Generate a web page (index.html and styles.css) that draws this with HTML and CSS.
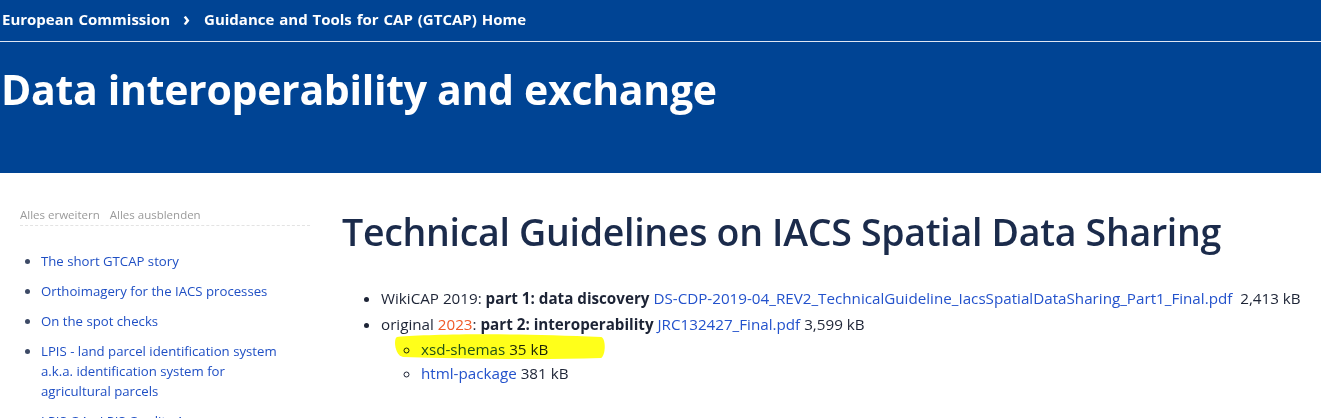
FILE: index.html
```html
<!DOCTYPE html>
<html lang="en">
<head>
    <meta charset="UTF-8">
    <title>Data interoperability and exchange</title>
    <link rel="stylesheet" href="styles.css">
</head>
<body>
    <div class="header">
        <div class="breadcrumb">
            <a href="#">European Commission</a>
            <span class="sep">&#8250;</span>
            <a href="#">Guidance and Tools for CAP (GTCAP) Home</a>
        </div>
        <h1 class="site-title">Data interoperability and exchange</h1>
    </div>

    <div class="page">
        <!-- Sidebar navigation -->
        <div class="sidebar">
            <div class="tree-tools">
                <a href="#">Alles erweitern</a>
                <a href="#">Alles ausblenden</a>
            </div>
            <ul class="nav">
                <li><a href="#">The short GTCAP story</a></li>
                <li><a href="#">Orthoimagery for the IACS processes</a></li>
                <li><a href="#">On the spot checks</a></li>
                <li><a href="#">LPIS - land parcel identification system a.k.a. identification system for agricultural parcels</a></li>
                <li><a href="#">LPIS QA - LPIS Quality Assurance</a></li>
            </ul>
        </div>

        <!-- Main content -->
        <div class="main">
            <h2 class="page-title">Technical Guidelines on IACS Spatial Data Sharing</h2>
            <ul class="docs">
                <li>WikiCAP 2019: <strong>part 1: data discovery</strong> <a href="#">DS-CDP-2019-04_REV2_TechnicalGuideline_IacsSpatialDataSharing_Part1_Final.pdf</a>&nbsp; 2,413 kB</li>
                <li>original <span class="year">2023</span>: <strong>part 2: interoperability</strong> <a href="#">JRC132427_Final.pdf</a> 3,599 kB
                    <ul class="sub">
                        <li class="marked">
                            <a href="#">xsd-shemas</a> 35 kB
                            <svg class="marker" width="214" height="30" viewBox="0 0 214 30">
                                <path d="M4 6 C40 3 120 2 208 6 C213 7 213 24 208 27 C150 29 80 28 10 26 C2 25 0 8 4 6 Z" fill="#ffff1a"/>
                            </svg>
                        </li>
                        <li><a href="#">html-package</a> 381 kB</li>
                    </ul>
                </li>
            </ul>
        </div>
    </div>
</body>
</html>
```

FILE: styles.css
```css
* {
    margin: 0;
    padding: 0;
    box-sizing: border-box;
}

body {
    font-family: 'Open Sans', 'Noto Sans', sans-serif;
    background: white;
    color: #1d2436;
}

a {
    text-decoration: none;
}

.header {
    background: #004494;
    height: 173px;
    color: white;
}

.breadcrumb {
    height: 42px;
    border-bottom: 1px solid #dfe6f3;
    padding: 9px 0 0 2px;
    font-size: 15px;
    font-weight: 700;
    word-spacing: 1px;
    display: flex;
}

.breadcrumb a {
    color: white;
}

.breadcrumb .sep {
    margin: 0 14px 0 13px;
    font-size: 19px;
    line-height: 20px;
}

.site-title {
    font-size: 41px;
    font-weight: 700;
    letter-spacing: -0.3px;
    padding: 19px 0 0 1px;
}

.page {
    display: flex;
}

.sidebar {
    width: 290px;
    margin-left: 20px;
    padding-top: 34px;
}

.tree-tools {
    font-size: 11.5px;
    color: #999;
    padding-bottom: 3px;
    border-bottom: 1px dashed #e3e3e3;
}

.tree-tools a {
    color: #9a9a9a;
    margin-right: 7px;
}

.nav {
    list-style: disc;
    padding-left: 21px;
    padding-top: 25px;
    font-size: 13.2px;
    line-height: 20px;
    color: #3d4a66;
}

.nav li {
    margin-bottom: 10px;
    padding-right: 30px;
}

.nav a {
    color: #1f4fc4;
}

.main {
    padding-left: 32px;
    padding-top: 33px;
}

.page-title {
    font-size: 37.5px;
    font-weight: 600;
    color: #1b2b4b;
    letter-spacing: -0.3px;
    margin-bottom: 28px;
}

.docs {
    list-style: disc;
    padding-left: 39px;
    font-size: 15.2px;
    line-height: 26px;
}

.docs a {
    color: #2352cc;
}

.year {
    color: #f05a28;
}

.sub {
    list-style: circle;
    padding-left: 40px;
    line-height: 24px;
}

.marked {
    position: relative;
}

/* hand-drawn highlighter stroke over the item */
.marker {
    position: absolute;
    left: -28px;
    top: -6px;
    mix-blend-mode: multiply;
    pointer-events: none;
}
```
